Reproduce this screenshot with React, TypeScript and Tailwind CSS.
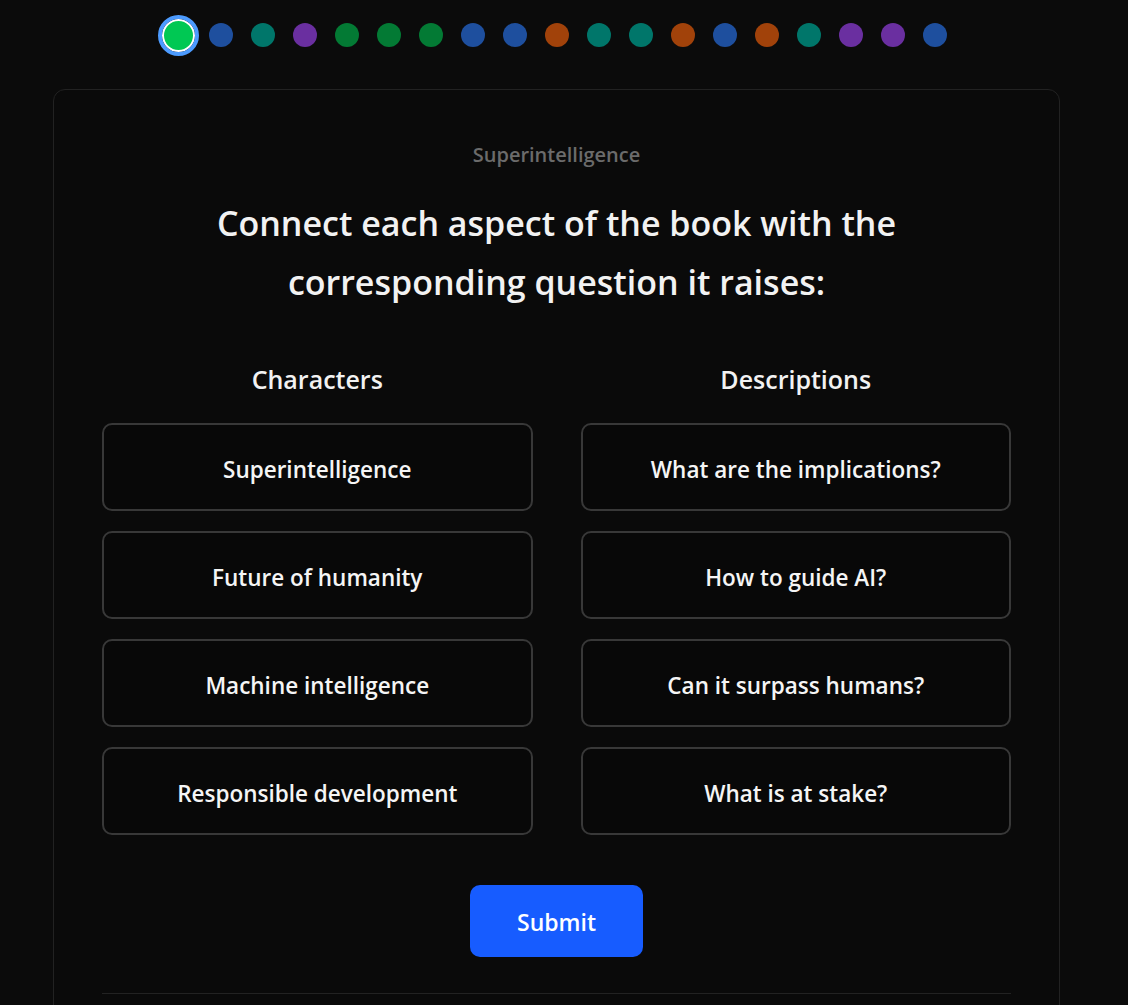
import React from "react";

const dotColors = [
  "bg-[#00c853]",
  "bg-[#1e4f9e]",
  "bg-[#00766a]",
  "bg-[#6a2fa0]",
  "bg-[#037a34]",
  "bg-[#037a34]",
  "bg-[#037a34]",
  "bg-[#1e4f9e]",
  "bg-[#1e4f9e]",
  "bg-[#a1420a]",
  "bg-[#00766a]",
  "bg-[#00766a]",
  "bg-[#a1420a]",
  "bg-[#1e4f9e]",
  "bg-[#a1420a]",
  "bg-[#00766a]",
  "bg-[#6a2fa0]",
  "bg-[#6a2fa0]",
  "bg-[#1e4f9e]",
];

const left = [
  "Superintelligence",
  "Future of humanity",
  "Machine intelligence",
  "Responsible development",
];
const right = [
  "What are the implications?",
  "How to guide AI?",
  "Can it surpass humans?",
  "What is at stake?",
];

function Box({ text }: { text: string }) {
  return (
    <div className="h-[88px] rounded-[10px] border-2 border-[#383838] bg-[#080808] flex items-center justify-center pt-[6px] text-[22.5px] font-semibold text-[#f5f5f5]">
      {text}
    </div>
  );
}

export default function App() {
  return (
    <div
      className="min-h-[1005px] w-full bg-[#0b0b0b] text-white"
      style={{ fontFamily: '"Open Sans", "Noto Sans", sans-serif' }}
    >
      <div className="w-[1113px]">
        <div className="flex justify-center pt-[23px] h-[89px]">
          <div className="flex gap-[18px] items-start">
            {dotColors.map((c, i) =>
              i === 0 ? (
                <div key={i} className="w-6 h-6 flex items-center justify-center">
                  <div className={`shrink-0 w-[33px] h-[33px] rounded-full border-2 border-white ${c} outline-4 outline-solid outline-[#4c9bff]`} />
                </div>
              ) : (
                <div key={i} className={`w-6 h-6 rounded-full ${c}`} />
              )
            )}
          </div>
        </div>
        <div className="mx-auto w-[1007px] rounded-[12px] border border-[#222222] bg-[#0a0a0a] px-[48px] pt-[51px] pb-[10px]">
          <div className="text-center text-[20px] font-semibold text-[#6b6b6b] leading-[28px]">
            Superintelligence
          </div>
          <h1 className="mt-[25px] text-center text-[34px] font-semibold leading-[59px] text-[#f2f2f2] px-[100px]">
            Connect each aspect of the book with the corresponding question it raises:
          </h1>
          <div className="mt-[51px] grid grid-cols-2 gap-x-[48px]">
            <div>
              <div className="text-center text-[25px] font-semibold text-[#f2f2f2] leading-[32px] mb-[28px]">
                Characters
              </div>
              <div className="flex flex-col gap-[20px]">
                {left.map((t) => (
                  <Box key={t} text={t} />
                ))}
              </div>
            </div>
            <div>
              <div className="text-center text-[25px] font-semibold text-[#f2f2f2] leading-[32px] mb-[28px]">
                Descriptions
              </div>
              <div className="flex flex-col gap-[20px]">
                {right.map((t) => (
                  <Box key={t} text={t} />
                ))}
              </div>
            </div>
          </div>
          <div className="flex justify-center mt-[50px]">
            <button className="w-[173px] h-[72px] rounded-[10px] bg-[#175cff] text-white text-[23px] font-semibold pt-[2px]">
              Submit
            </button>
          </div>
          <div className="mt-[36px] h-px bg-[#222222]" />
          <div className="h-[40px]" />
        </div>
      </div>
    </div>
  );
}
